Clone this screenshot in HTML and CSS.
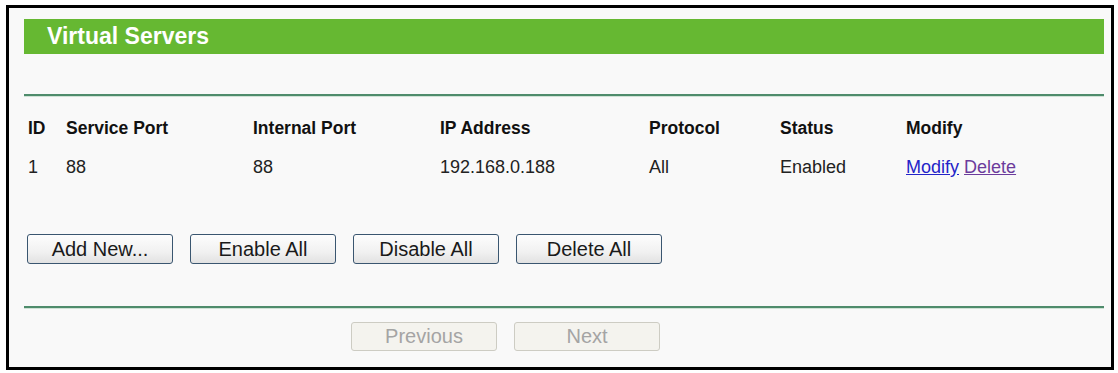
FILE: index.html
```html
<!DOCTYPE html>
<html>
<head>
<meta charset="utf-8">
<link rel="stylesheet" href="styles.css">
</head>
<body>
<div class="frame">
  <div class="title">Virtual Servers</div>
  <div class="rule rule-top"></div>
  <div class="table">
    <div class="row head">
      <div>ID</div><div>Service Port</div><div>Internal Port</div><div>IP Address</div><div>Protocol</div><div>Status</div><div>Modify</div>
    </div>
    <div class="row">
      <div>1</div><div>88</div><div>88</div><div>192.168.0.188</div><div>All</div><div>Enabled</div><div><a href="#" class="lnk">Modify</a> <a href="#" class="lnk visited">Delete</a></div>
    </div>
  </div>
  <div class="actions">
    <button class="btn">Add New...</button>
    <button class="btn">Enable All</button>
    <button class="btn">Disable All</button>
    <button class="btn">Delete All</button>
  </div>
  <div class="rule rule-bottom"></div>
  <div class="pager">
    <button class="btn disabled" disabled>Previous</button>
    <button class="btn disabled" disabled>Next</button>
  </div>
</div>
</body>
</html>
```
FILE: styles.css
```css
html, body {
  margin: 0;
  padding: 0;
  background: #ffffff;
}
body {
  font-family: "Liberation Sans", Arial, sans-serif;
  color: #222;
}
.frame {
  box-sizing: border-box;
  margin: 5px 0 0 6px;
  width: 1108px;
  height: 365px;
  border: 3px solid #000;
  background: #f9f9f9;
  padding: 11px 7px 0 15px;
}
.title {
  height: 35px;
  line-height: 35px;
  background: #66b832;
  color: #fff;
  font-weight: bold;
  font-size: 23px;
  padding-left: 23px;
}
.rule {
  height: 2px;
  background: #4f8c6c;
  box-shadow: 0 1px 0 #cfe3d6;
}
.rule-top {
  margin-top: 40px;
}
.table {
  margin-top: 13px;
  padding-left: 4px;
}
.row {
  display: grid;
  grid-template-columns: 38px 187px 187px 209px 131px 126px 1fr;
  height: 39px;
  line-height: 39px;
  font-size: 18px;
  white-space: nowrap;
}
.row.head {
  font-weight: bold;
  font-size: 17.5px;
  color: #111;
}
.lnk {
  color: #2424c8;
  text-decoration: underline;
}
.lnk.visited {
  color: #6c3c9c;
}
.actions {
  display: flex;
  gap: 17px;
  margin-top: 47px;
  padding-left: 3px;
}
.btn {
  box-sizing: border-box;
  width: 146px;
  height: 30px;
  font-family: "Liberation Sans", Arial, sans-serif;
  font-size: 20px;
  color: #1a1a1a;
  background: linear-gradient(#fdfdfd, #f1f1f1 60%, #e2e2e2);
  border: 1px solid #3a5670;
  border-radius: 3px;
  padding: 0;
}
.rule-bottom {
  margin-top: 42px;
}
.pager {
  display: flex;
  gap: 17px;
  margin-top: 14px;
  padding-left: 327px;
}
.btn.disabled {
  height: 29px;
  background: #f4f3ee;
  border: 1px solid #cdccc3;
  color: #a4a4a4;
}
```
